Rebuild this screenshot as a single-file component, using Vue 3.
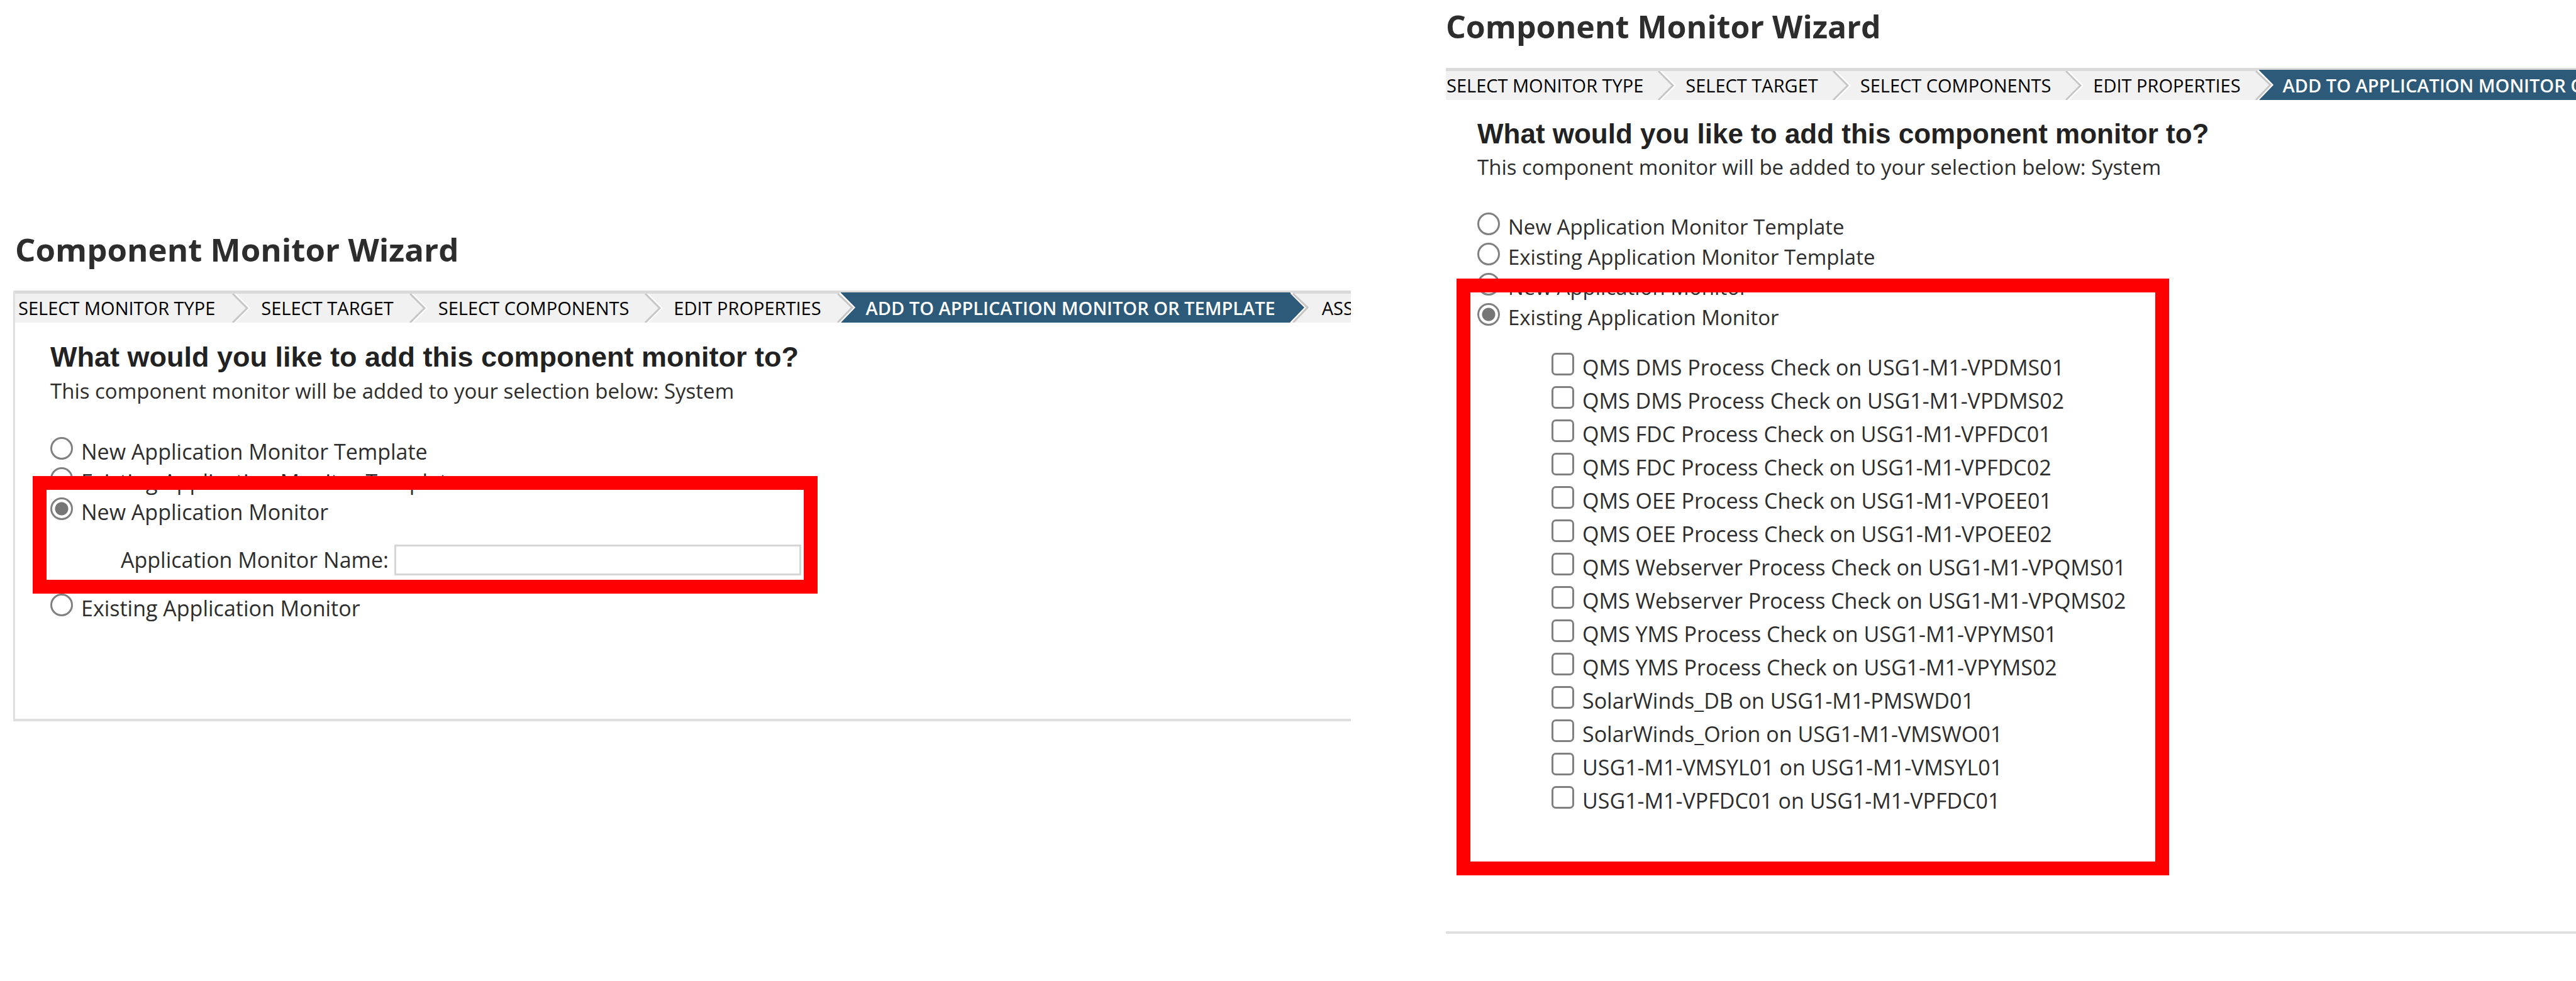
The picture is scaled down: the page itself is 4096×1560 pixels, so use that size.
<script setup>
import { ref } from 'vue'

const steps = [
  'SELECT MONITOR TYPE',
  'SELECT TARGET',
  'SELECT COMPONENTS',
  'EDIT PROPERTIES',
  'ADD TO APPLICATION MONITOR OR TEMPLATE'
]
const activeStep = 4

const options = [
  { value: 'new-template', label: 'New Application Monitor Template' },
  { value: 'existing-template', label: 'Existing Application Monitor Template' },
  { value: 'new-monitor', label: 'New Application Monitor' },
  { value: 'existing-monitor', label: 'Existing Application Monitor' }
]

const monitors = [
  'QMS DMS Process Check on USG1-M1-VPDMS01',
  'QMS DMS Process Check on USG1-M1-VPDMS02',
  'QMS FDC Process Check on USG1-M1-VPFDC01',
  'QMS FDC Process Check on USG1-M1-VPFDC02',
  'QMS OEE Process Check on USG1-M1-VPOEE01',
  'QMS OEE Process Check on USG1-M1-VPOEE02',
  'QMS Webserver Process Check on USG1-M1-VPQMS01',
  'QMS Webserver Process Check on USG1-M1-VPQMS02',
  'QMS YMS Process Check on USG1-M1-VPYMS01',
  'QMS YMS Process Check on USG1-M1-VPYMS02',
  'SolarWinds_DB on USG1-M1-PMSWD01',
  'SolarWinds_Orion on USG1-M1-VMSWO01',
  'USG1-M1-VMSYL01 on USG1-M1-VMSYL01',
  'USG1-M1-VPFDC01 on USG1-M1-VPFDC01'
]

const wizards = [
  { id: 'left', selected: ref('new-monitor'), steps: [...steps, 'ASS'] },
  { id: 'right', selected: ref('existing-monitor'), steps }
]
const monitorName = ref('')
const checked = ref([])
</script>

<template>
  <main class="page">
    <section v-for="w in wizards" :key="w.id" class="wizard" :class="w.id">
      <h1 class="title">Component Monitor Wizard</h1>
      <div class="panel">
        <ol class="steps">
          <li v-for="(step, i) in w.steps" :key="step" class="step" :class="{ active: i === activeStep, last: i > activeStep }">
            <span class="step-label">{{ step }}</span>
            <svg v-if="i === activeStep - 1" class="chevron tall" viewBox="0 0 30 48" aria-hidden="true">
              <path d="M5 0H30V48H5L28 24Z" fill="#2c5a78" />
              <path d="M4 1L27 24L4 48" fill="none" stroke="#fff" stroke-width="3" />
              <path d="M1 2L24 24L1 48" fill="none" stroke="#c6c6c6" stroke-width="3" />
            </svg>
            <svg v-else-if="i === activeStep" class="chevron tall" viewBox="0 0 30 48" aria-hidden="true">
              <path d="M0 0L24 24L0 48Z" fill="#2c5a78" />
              <path d="M2 1L25 24L2 48" fill="none" stroke="#fff" stroke-width="3" />
              <path d="M5 2L28 24L5 48" fill="none" stroke="#c6c6c6" stroke-width="3" />
            </svg>
            <svg v-else-if="i < activeStep" class="chevron" viewBox="0 0 30 46" aria-hidden="true">
              <path d="M4 0L27 23L4 46" fill="none" stroke="#fff" stroke-width="3" />
              <path d="M1 0L24 23L1 46" fill="none" stroke="#c6c6c6" stroke-width="3" />
            </svg>
          </li>
        </ol>
        <div class="content">
          <h2 class="question">What would you like to add this component monitor to?</h2>
          <p class="hint">This component monitor will be added to your selection below: System</p>
          <div class="choices">
            <template v-for="o in options" :key="o.value">
              <label class="choice">
                <input v-model="w.selected.value" type="radio" class="radio" :name="'target-' + w.id" :value="o.value" />
                <span>{{ o.label }}</span>
              </label>
              <div v-if="w.id === 'left' && o.value === 'new-monitor'" class="name-row">
                <label for="monitor-name">Application Monitor Name:</label>
                <input id="monitor-name" v-model="monitorName" type="text" class="name-input" />
              </div>
            </template>
            <div v-if="w.id === 'right'" class="monitors">
              <label v-for="m in monitors" :key="m" class="monitor">
                <input v-model="checked" type="checkbox" class="box" :value="m" />
                <span>{{ m }}</span>
              </label>
            </div>
            <div class="highlight"></div>
          </div>
        </div>
      </div>
    </section>
  </main>
</template>

<style>
body {
  margin: 0;
  background: #fff;
}
</style>

<style scoped>
.page {
  display: grid;
  grid-template-columns: 2148fr 1797fr;
  column-gap: 151px;
  align-items: start;
  overflow: hidden;
  min-height: 100vh;
  font-family: "Open Sans", "Noto Sans", sans-serif;
  font-size: 34px;
  line-height: 48px;
  color: #2d2d2d;
}
.wizard {
  min-width: 0;
}
.left {
  padding: 362px 0 0 21px;
}
.right {
  padding-top: 8px;
}
.title {
  margin: 0 0 32px;
  font-size: 50px;
  line-height: 68px;
  font-weight: 700;
  color: #2d2d2d;
}
.left .title {
  padding-left: 3px;
  font-size: 51px;
}
.panel {
  border-bottom: 4px solid #dfdfdf;
}
.left .panel {
  border-left: 3px solid #dfdfdf;
  padding-bottom: 152px;
}
.right .panel {
  padding-bottom: 181px;
}
.steps {
  display: flex;
  margin: 0;
  padding: 5px 0 0;
  background: linear-gradient(#dadada 5px, #f1f1f1 5px);
  list-style: none;
  overflow: hidden;
}
.step {
  display: flex;
  flex: none;
  height: 46px;
  font-size: 29px;
  line-height: 46px;
  font-weight: 500;
  color: #000;
}
.step-label {
  padding: 0 25px 0 16px;
}
.right .step-label {
  padding: 0 23px 0 14px;
}
.left .step:first-child .step-label {
  padding: 0 27px 0 5px;
}
.right .step:first-child .step-label {
  padding-left: 1px;
}
.step.active .step-label {
  margin-top: -2px;
  padding-top: 2px;
  padding-right: 23px;
  background: #2c5a78;
  color: #fff;
  font-weight: 600;
}
.last .step-label {
  padding: 0 0 0 21px;
}
.chevron {
  display: block;
  width: 30px;
  height: 46px;
}
.tall {
  height: 48px;
  margin-top: -2px;
}
.content {
  padding: 28px 0 0 50px;
}
.left .content {
  padding: 29px 0 0 56px;
}
.question {
  margin: 0 0 3px;
  font-family: "Liberation Sans", Arial, sans-serif;
  font-size: 44px;
  line-height: 52px;
  font-weight: 700;
  color: #222;
}
.left .question {
  margin-bottom: 4px;
  font-size: 45px;
}
.hint {
  margin: 0 0 47px;
  font-size: 33px;
}
.left .hint {
  margin-bottom: 48px;
}
.choices {
  position: relative;
}
.choice,
.monitor {
  display: flex;
  width: max-content;
}
.choice {
  gap: 13px;
}
.right .choice {
  font-size: 33px;
}
.radio,
.box {
  appearance: none;
  box-sizing: border-box;
  flex: none;
  width: 36px;
  height: 36px;
  margin: 1px 0 0;
  border: 3px solid #808080;
  background: #fff;
}
.radio {
  border-radius: 50%;
}
.radio:checked {
  background: radial-gradient(circle, #767676 10px, #fff 11px);
}
.box {
  margin-top: 3px;
  border-radius: 7px;
}
.name-row {
  display: flex;
  gap: 9px;
  margin: 28px 0 28px 112px;
}
.name-input {
  box-sizing: border-box;
  width: 647px;
  height: 49px;
  padding: 0 8px;
  border: 3px solid #d6d6d6;
  font: inherit;
}
.monitors {
  margin: 29px 0 0 118px;
}
.monitor {
  gap: 13px;
  line-height: 53px;
}
.highlight {
  position: absolute;
  box-sizing: border-box;
  border: 22px solid #f00;
  pointer-events: none;
}
.left .highlight {
  top: 63px;
  left: -28px;
  width: 1248px;
  height: 187px;
}
.right .highlight {
  top: 106px;
  left: -33px;
  width: 1133px;
  height: 949px;
}
</style>
